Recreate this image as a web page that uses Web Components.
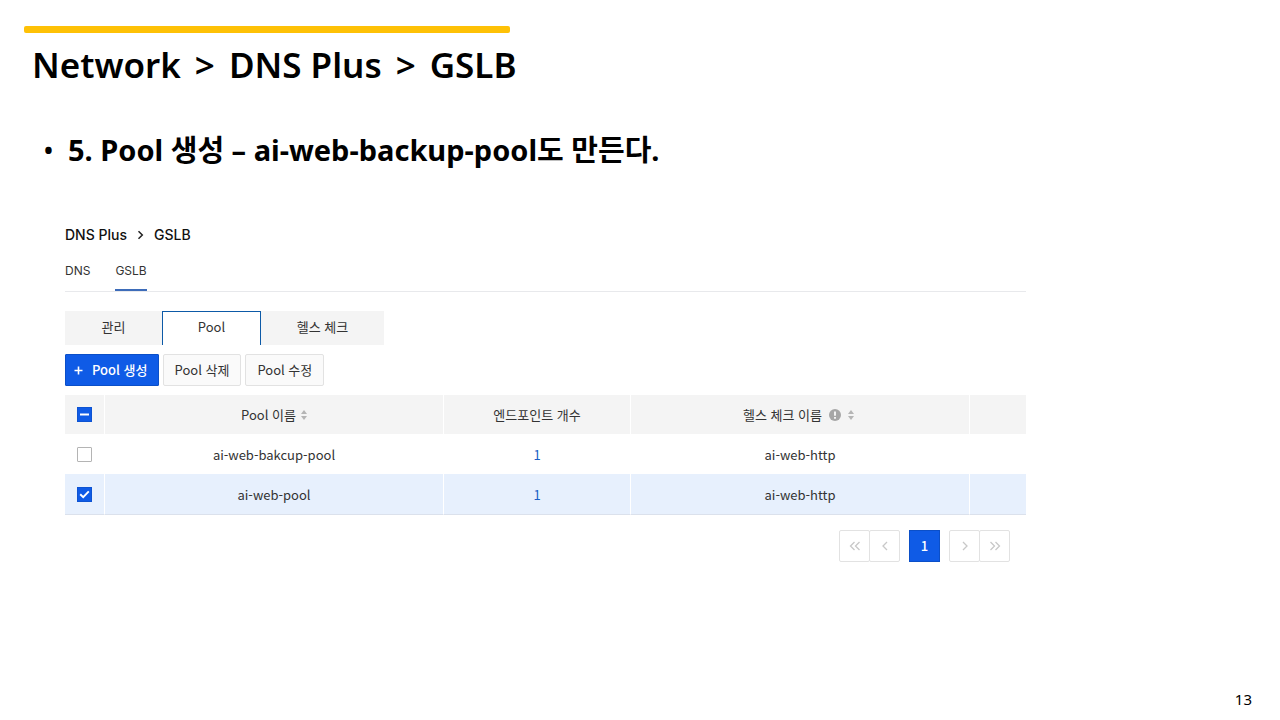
<!DOCTYPE html>
<html lang="ko">
<head>
<meta charset="utf-8">
<meta name="viewport" content="width=device-width, initial-scale=1">
<title>Network &gt; DNS Plus &gt; GSLB</title>
<style>
  body {
    margin: 0;
    background: #fff;
    color: #000;
    --ui: "Noto Sans CJK KR", sans-serif;
    --latin: Inter, "Noto Sans CJK KR", sans-serif;
    --deck: "Noto Sans", "Noto Sans CJK KR", sans-serif;
    --blue: #0f5be6;
    --grey: #f4f4f4;
    --line: #e2e2e2;
    --text: #333;
  }
</style>
</head>
<body>
<deck-slide page="13">
  <span slot="title">Network</span>
  <span slot="title">&gt;</span>
  <span slot="title">DNS Plus</span>
  <span slot="title">&gt;</span>
  <span slot="title">GSLB</span>
  <span slot="point">5. Pool 생성 – ai-web-backup-pool도 만든다.</span>
  <gslb-console>
    <crumb-trail slot="head" parent="DNS Plus" current="GSLB"></crumb-trail>
    <service-tabs slot="head">
      <a href="#dns">DNS</a>
      <a href="#gslb" aria-current="page">GSLB</a>
    </service-tabs>
    <section-tabs>
      <button type="button">관리</button>
      <button type="button" class="wide" aria-pressed="true">Pool</button>
      <button type="button" class="last">헬스 체크</button>
    </section-tabs>
    <tool-bar>
      <tool-button primary>Pool 생성</tool-button>
      <tool-button>Pool 삭제</tool-button>
      <tool-button>Pool 수정</tool-button>
    </tool-bar>
    <pool-table></pool-table>
    <page-nav></page-nav>
  </gslb-console>
</deck-slide>

<script>
  function define(name, html, setup) {
    const template = document.createElement("template");
    template.innerHTML = html;
    customElements.define(name, class extends HTMLElement {
      constructor() {
        super();
        this.attachShadow({ mode: "open" }).append(template.content.cloneNode(true));
      }
      connectedCallback() {
        if (setup) setup(this, this.shadowRoot);
      }
    });
  }

  define("deck-slide", `
    <style>
      :host { display: flex; flex-direction: column; min-height: 100vh; box-sizing: border-box; padding-top: 26px; }
      .bar { width: 38%; height: 7px; margin-left: 24px; border-radius: 2px; background: #fec106; }
      h1 { display: flex; gap: 14px; margin: 10px 32px 0; font: 600 35px/44px var(--deck); }
      ul { margin: 43px 40px 55px 68px; padding: 0; list-style: none; font: 700 29px/40px var(--deck); }
      li { display: flex; margin-left: -25px; }
      li::before { content: "•"; flex: none; width: 25px; font-weight: 400; }
      main { flex: 1; padding: 0 65px; }
      footer { padding: 0 28px 9px; text-align: right; font: 400 15px/24px var(--deck); }
    </style>
    <div class="bar"></div>
    <h1><slot name="title"></slot></h1>
    <ul><li><slot name="point"></slot></li></ul>
    <main><slot></slot></main>
    <footer></footer>
  `, (host, root) => {
    root.querySelector("footer").textContent = host.getAttribute("page");
  });

  define("gslb-console", `
    <style>
      :host { display: block; max-width: 961px; color: var(--text); font: 400 13px/20px var(--ui); }
      header { display: flex; flex-direction: column; gap: 16px; margin-bottom: 19px; }
      .body { display: flex; flex-direction: column; gap: 9px; }
    </style>
    <header><slot name="head"></slot></header>
    <div class="body"><slot></slot></div>
  `);

  define("crumb-trail", `
    <style>
      :host { display: block; }
      nav { display: flex; align-items: center; gap: 9px; color: #111; font: 500 14px/20px var(--latin); }
      a { color: inherit; text-decoration: none; }
      svg { display: block; }
    </style>
    <nav aria-label="breadcrumb">
      <a href="#dns-plus"></a>
      <svg width="9" height="10" viewBox="0 0 9 10" fill="none" stroke="#222" stroke-width="1.5"><path d="M2.5 1.2 6.3 5 2.5 8.8"/></svg>
      <span></span>
    </nav>
  `, (host, root) => {
    root.querySelector("a").textContent = host.getAttribute("parent");
    root.querySelector("span").textContent = host.getAttribute("current");
  });

  define("service-tabs", `
    <style>
      :host { display: block; border-bottom: 1px solid #e8e9ec; }
      nav { display: flex; gap: 25px; font: 400 12px/20px var(--latin); }
      ::slotted(a) { padding-bottom: 8px; border-bottom: 2px solid transparent; color: var(--text); text-decoration: none; }
      ::slotted(a[aria-current]) { border-color: #3d6cb9; }
    </style>
    <nav><slot></slot></nav>
  `);

  define("section-tabs", `
    <style>
      :host { display: flex; }
      ::slotted(button) { box-sizing: border-box; width: 97px; height: 34px; padding: 0 0 2px; border: 0; background: var(--grey); color: var(--text); font: 400 13px/20px var(--ui); }
      ::slotted(button.wide) { width: 99px; }
      ::slotted(button.last) { width: 123px; }
      ::slotted(button[aria-pressed]) { padding-bottom: 3px; border: 1px solid #0d5aa7; border-bottom: 0; background: #fff; }
    </style>
    <slot></slot>
  `);

  define("tool-bar", `
    <style>:host { display: flex; gap: 4px; }</style>
    <slot></slot>
  `);

  define("tool-button", `
    <style>
      :host { display: block; }
      button { display: flex; align-items: center; gap: 9px; box-sizing: border-box; height: 32px; padding: 0 11px; border: 1px solid var(--line); border-radius: 2px; background: #fafafa; color: var(--text); font: 400 13px/20px var(--ui); }
      svg { display: none; }
      :host([primary]) button { padding: 0 10px 0 8px; border-color: #0b4fc8; border-radius: 1px; background: var(--blue); color: #fff; font-weight: 500; }
      :host([primary]) svg { display: block; }
    </style>
    <button type="button">
      <svg width="9" height="9" viewBox="0 0 9 9" stroke="#fff" stroke-width="1.6"><path d="M4.5.5v8M.5 4.5h8"/></svg>
      <span><slot></slot></span>
    </button>
  `);

  define("check-box", `
    <style>
      :host { display: block; height: 15px; }
      input { appearance: none; display: block; box-sizing: border-box; width: 15px; height: 15px; margin: 0 auto; border: 1px solid #b4b4b4; border-radius: 1px; background: #fff center / 13px 13px no-repeat; }
      input:checked, input:indeterminate { border-color: #0d53d2; border-radius: 0; background-color: var(--blue); }
      input:checked { background-image: url("data:image/svg+xml,%3Csvg xmlns='http://www.w3.org/2000/svg' viewBox='0 0 13 13'%3E%3Cpath d='M2.2 6.3 5.2 9.2 10.8 3.4' fill='none' stroke='%23fff' stroke-width='1.9'/%3E%3C/svg%3E"); }
      input:indeterminate { background-image: url("data:image/svg+xml,%3Csvg xmlns='http://www.w3.org/2000/svg' viewBox='0 0 13 13'%3E%3Cpath d='M2 6.5h9' stroke='%23fff' stroke-width='2'/%3E%3C/svg%3E"); }
    </style>
    <input type="checkbox">
  `, (host, root) => {
    const input = root.querySelector("input");
    input.checked = host.hasAttribute("checked");
    input.indeterminate = host.hasAttribute("mixed");
    input.setAttribute("aria-label", host.getAttribute("label"));
  });

  define("sort-icon", `
    <style>:host { display: block; } svg { display: block; }</style>
    <svg width="6" height="10" viewBox="0 0 6 10" fill="#b5b5b5"><path d="M3 0 6 4H0zM3 10 0 6h6z"/></svg>
  `);

  define("pool-table", `
    <style>
      :host { display: block; margin-bottom: 6px; }
      table { width: 100%; table-layout: fixed; border-collapse: separate; border-spacing: 0; }
      th, td { box-sizing: border-box; height: 40px; padding: 0; border-right: 1px solid #fff; text-align: center; font-weight: 400; }
      th { height: 39px; background: var(--grey); }
      td + td { padding-top: 2px; }
      th:last-child, td:last-child { border-right: 0; }
      .pick { width: 40px; }
      .count { width: 187px; }
      .rest { width: 56px; }
      .cell { display: flex; align-items: center; justify-content: center; gap: 5px; }
      .cell.info { gap: 7px; padding-right: 3px; }
      .on td { height: 41px; background: #e7f0fd; border-bottom: 1px solid #dbe1ec; }
      a { color: #1a5fc4; text-decoration: none; }
    </style>
    <table>
      <thead>
        <tr>
          <th class="pick"><check-box mixed label="전체 선택"></check-box></th>
          <th><div class="cell">Pool 이름<sort-icon></sort-icon></div></th>
          <th class="count">엔드포인트 개수</th>
          <th><div class="cell info">헬스 체크 이름
            <svg width="12" height="12" viewBox="0 0 12 12"><circle cx="6" cy="6" r="6" fill="#a6a6a6"/><path d="M6 2.4v4.4M6 8v1.7" stroke="#fff" stroke-width="1.7"/></svg>
            <sort-icon></sort-icon></div></th>
          <th class="rest"></th>
        </tr>
      </thead>
      <tbody>
        <tr><td><check-box label="ai-web-bakcup-pool"></check-box></td><td>ai-web-bakcup-pool</td><td><a href="#backup">1</a></td><td>ai-web-http</td><td></td></tr>
        <tr class="on"><td><check-box checked label="ai-web-pool"></check-box></td><td>ai-web-pool</td><td><a href="#pool">1</a></td><td>ai-web-http</td><td></td></tr>
      </tbody>
    </table>
  `);

  define("page-nav", `
    <style>
      :host { display: block; padding-right: 16px; }
      nav { display: flex; justify-content: flex-end; gap: 9px; }
      div { display: flex; }
      button { display: grid; place-items: center; box-sizing: border-box; width: 31px; height: 32px; padding: 0; border: 1px solid var(--line); border-radius: 2px; background: #fff; color: #fff; font: 500 13px/20px var(--ui); }
      div button + button { margin-left: -1px; }
      .now { border-color: #0b4fc8; border-radius: 0; background: var(--blue); }
      svg { fill: none; stroke: #c8c8c8; stroke-width: 1.3; }
    </style>
    <nav aria-label="pages">
      <div>
        <button type="button" aria-label="첫 페이지"><svg width="12" height="10" viewBox="0 0 12 10"><path d="M5.5 1 1.5 5l4 4M10.5 1l-4 4 4 4"/></svg></button>
        <button type="button" aria-label="이전"><svg width="12" height="10" viewBox="0 0 12 10"><path d="M8 1 4 5l4 4"/></svg></button>
      </div>
      <button type="button" class="now">1</button>
      <div>
        <button type="button" aria-label="다음"><svg width="12" height="10" viewBox="0 0 12 10"><path d="m4 1 4 4-4 4"/></svg></button>
        <button type="button" aria-label="마지막 페이지"><svg width="12" height="10" viewBox="0 0 12 10"><path d="m1.5 1 4 4-4 4M6.5 1l4 4-4 4"/></svg></button>
      </div>
    </nav>
  `);
</script>
</body>
</html>
